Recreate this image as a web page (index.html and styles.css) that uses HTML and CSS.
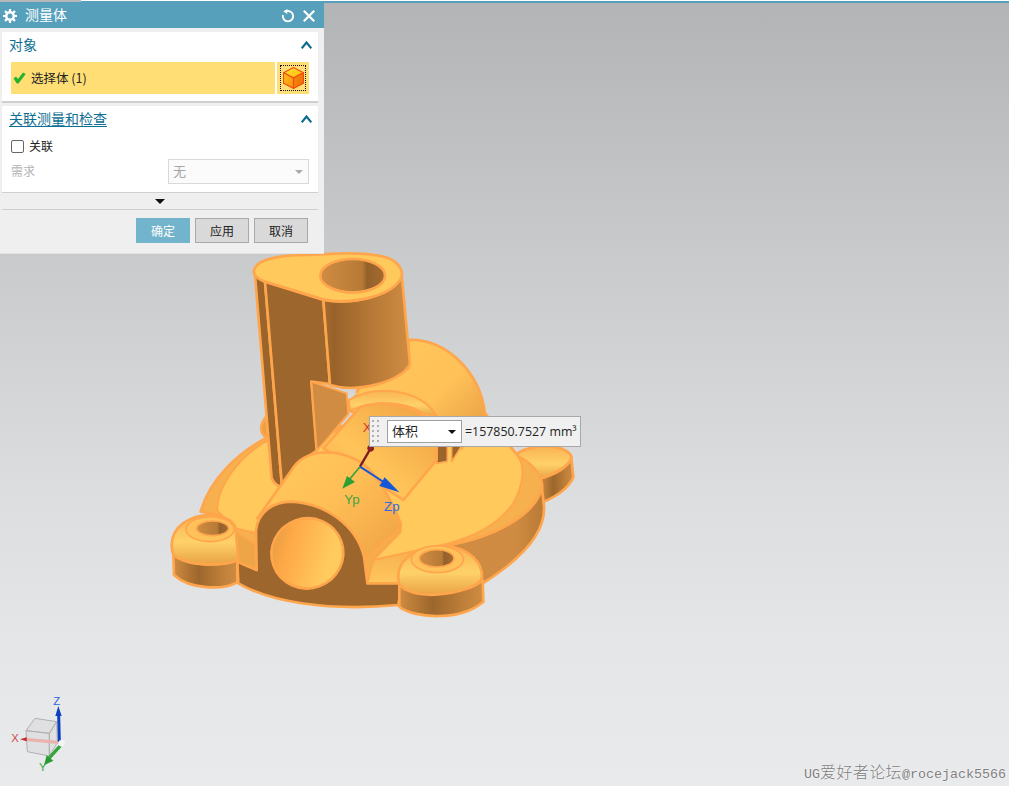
FILE: index.html
```html
<!DOCTYPE html>
<html lang="zh">
<head>
<meta charset="utf-8">
<title>测量体</title>
<link rel="stylesheet" href="styles.css">
</head>
<body>
<div class="app">
  <div class="topline"><span class="topline-gap"></span><span class="topline-bar"></span></div>
  <main class="canvas">
    <svg class="model" viewBox="0 0 1290 1170" width="430" height="390" aria-hidden="true">
      <defs>
        <linearGradient id="wallA" x1="0" x2="1" y1="0" y2="0">
          <stop offset="0" stop-color="#cf8b41"/><stop offset=".4" stop-color="#9c662c"/><stop offset=".75" stop-color="#bd7f39"/><stop offset="1" stop-color="#d08c42"/>
        </linearGradient>
        <linearGradient id="wallB" x1="0" x2="1" y1="0" y2="0">
          <stop offset="0" stop-color="#d08c42"/><stop offset=".7" stop-color="#cf8b41"/><stop offset="1" stop-color="#b87a36"/>
        </linearGradient>
        <linearGradient id="tower" x1="0" x2="1" y1="0" y2="0">
          <stop offset="0" stop-color="#a56c2f"/><stop offset=".12" stop-color="#98622a"/><stop offset=".6" stop-color="#b97b37"/><stop offset="1" stop-color="#d08c42"/>
        </linearGradient>
        <linearGradient id="bore" x1="0" x2="1" y1="0" y2="0">
          <stop offset="0" stop-color="#d08c42"/><stop offset=".65" stop-color="#b67a36"/><stop offset=".72" stop-color="#94602a"/><stop offset="1" stop-color="#a56c30"/>
        </linearGradient>
        <linearGradient id="dome" x1="0" x2="0" y1="0" y2="1">
          <stop offset="0" stop-color="#f8b352"/><stop offset=".55" stop-color="#ffd169"/><stop offset="1" stop-color="#e8a346"/>
        </linearGradient>
        <linearGradient id="cyl" x1="0" x2="1" y1="0" y2=".75">
          <stop offset="0" stop-color="#ffca5e"/><stop offset=".55" stop-color="#ffbf56"/><stop offset="1" stop-color="#f2a747"/>
        </linearGradient>
        <linearGradient id="cyl2" x1="0" x2="1" y1="1" y2="0">
          <stop offset="0" stop-color="#f8b04d"/><stop offset=".4" stop-color="#ffc459"/><stop offset="1" stop-color="#ee9f42"/>
        </linearGradient>
        <linearGradient id="elbow" x1="0" x2="1" y1=".1" y2=".9">
          <stop offset="0" stop-color="#ffc75c"/><stop offset=".6" stop-color="#ffc158"/><stop offset="1" stop-color="#e59c41"/>
        </linearGradient>
        <linearGradient id="hole" x1="0" x2="1" y1="0" y2=".7">
          <stop offset="0" stop-color="#d9963f"/><stop offset=".35" stop-color="#ffa947"/><stop offset=".85" stop-color="#ffcb5f"/>
        </linearGradient>
        <linearGradient id="rim" x1="0" x2="0" y1="0" y2="1">
          <stop offset="0" stop-color="#f7b04f"/><stop offset=".8" stop-color="#f6b04e"/><stop offset="1" stop-color="#ffc75d"/>
        </linearGradient>
      </defs>
      <g stroke="#ffa64d" stroke-width="8" stroke-linejoin="round">
        <path fill="#e8a042" d="M320 528C298 555 298 580 322 594Z"/>
        <path fill="url(#wallA)" d="M1140 715C1185 705 1228 680 1234 652L1240 712C1222 750 1185 770 1148 787Z"/>
        <path fill="url(#dome)" d="M1060 650C1100 608 1222 610 1234 650C1230 682 1180 702 1140 716Z"/>
        <path fill="url(#wallB)" d="M870 915C1000 890 1120 830 1146 745L1152 800C1156 880 1080 960 968 1030L930 1030Z"/>
        <path fill="url(#rim)" d="M122 815C148 720 230 640 325 590L960 500L1075 650C1125 670 1150 720 1146 745C1120 830 1000 890 870 915L720 1030L620 1030L290 1000L225 870L180 825Z"/>
        <path fill="#ffc95c" stroke-width="6" d="M172 812C170 740 240 645 325 600L960 520L1075 650C1095 680 1092 730 1060 790C1010 860 940 890 860 912L640 960L225 865Z"/>
        <path fill="url(#elbow)" d="M745 300C850 292 960 390 975 522L905 625L560 510L600 440L745 385Z"/>
        <path fill="#d8d8d8" stroke="none" d="M562 458L592 458L566 482Z"/>
        <path fill="url(#dome)" stroke-width="6" d="M566 480C650 432 780 445 832 530L790 520C735 482 640 480 570 512Z"/>
        <path fill="#9a642b" stroke-width="5" d="M830 618L862 618L862 664L830 670Z"/>
        <path fill="#9a642b" stroke-width="5" d="M875 618L905 618L875 665Z"/>
        <path fill="#9a642b" d="M285 105L335 715C345 735 355 740 366 740L315 125Z"/>
        <path fill="#9c662c" d="M315 125L490 180L510 432L454 425L470 632C440 650 395 685 366 740Z"/>
        <path fill="url(#tower)" d="M490 180C570 195 690 175 725 105L750 372C730 420 600 462 510 435Z"/>
        <path fill="#d08c42" stroke-width="6" d="M454 425L560 460L565 522L490 610L470 632Z"/>
        <path fill="#ffc95c" d="M282 90C290 55 370 45 440 45C520 40 610 35 670 50C710 60 730 85 725 110C700 170 570 195 490 178C430 160 370 140 315 125C295 118 278 108 282 90Z"/>
        <ellipse fill="url(#bore)" cx="578" cy="107" rx="97" ry="50"/>
        <path fill="url(#cyl2)" d="M490 625L600 502C680 475 790 500 830 570L830 660L730 780Z"/>
        <path fill="url(#cyl)" d="M292 835L395 690C430 630 520 620 600 665C650 700 690 770 722 850L722 862L612 957L400 900Z"/>
        <path fill="#f5ad4c" stroke-width="6" d="M612 957L722 860L722 876L640 960L622 1030Z"/>
        <path fill="#eea547" stroke-width="6" d="M225 875L290 915L290 990L232 965Z"/>
        <path fill="#9c662c" d="M232 965L290 990L288 870C295 815 340 785 395 785C500 790 590 860 612 950L622 1030L725 1030L715 1095C500 1115 330 1085 235 1030Z"/>
        <ellipse fill="url(#hole)" cx="442" cy="940" rx="108" ry="105" transform="rotate(-20 442 940)"/>
        <path fill="url(#wallA)" d="M40 945L42 1005C90 1050 190 1050 232 1027L232 960C180 980 90 980 40 945Z"/>
        <path fill="url(#dome)" d="M35 915C35 860 90 825 150 825C200 825 232 850 228 878L235 960C200 975 90 985 40 945C36 935 35 925 35 915Z"/>
        <ellipse fill="#ffc25a" cx="150" cy="868" rx="72" ry="37" stroke-width="5"/>
        <ellipse fill="url(#bore)" cx="158" cy="865" rx="48" ry="22" stroke-width="5"/>
        <path fill="url(#wallA)" d="M718 1035L718 1100C760 1135 900 1145 970 1085L968 1020C940 1055 790 1080 718 1035Z"/>
        <path fill="url(#dome)" d="M718 1032C700 960 770 915 860 918C930 925 968 970 966 1012C960 1045 850 1072 780 1062C750 1058 725 1045 718 1032Z"/>
        <ellipse fill="#ffc25a" cx="832" cy="958" rx="78" ry="40" stroke-width="5"/>
        <ellipse fill="url(#bore)" cx="830" cy="955" rx="52" ry="26" stroke-width="5"/>
      </g>
      <g class="triad">
        <path d="M600 680L632 625" stroke="#7b2020" stroke-width="7"/>
        <circle cx="632" cy="625" r="10" fill="#8a2222"/>
        <path d="M600 680L565 722" stroke="#36a33a" stroke-width="5"/>
        <path fill="#2f9e35" d="M547 746L561 708L585 726Z"/>
        <path d="M600 680L680 732" stroke="#1557d6" stroke-width="6"/>
        <path fill="#1557d6" d="M718 757L658 738L674 712Z"/>
        <text class="triad-x" x="608" y="575">X</text>
        <text class="triad-y" x="553" y="793">Yp</text>
        <text class="triad-z" x="672" y="812">Zp</text>
      </g>
    </svg>

    <div class="measure-tip">
      <span class="grip"></span>
      <div class="tip-select"><span class="cjk-lift">体积</span><i class="arrow-down"></i></div>
      <span class="tip-value">=157850.7527 mm³</span>
    </div>

    <svg class="gizmo" viewBox="0 0 270 300" width="90" height="100" aria-hidden="true">
      <g fill="#d4d5d6" fill-opacity=".45" stroke="#b0b0b1" stroke-width="3">
        <path d="M78 152L105 115L170 125L148 160Z"/>
        <path d="M78 152L148 160L148 228L82 215Z"/>
        <path d="M148 160L170 125L172 188L148 228Z"/>
      </g>
      <path d="M75 178L185 188" stroke="#e9b3ad" stroke-width="10"/>
      <path fill="#c42a2a" d="M60 178L80 172L80 184Z"/>
      <path d="M178 186L176 105" stroke="#0d3fc0" stroke-width="9"/>
      <path fill="#0d3fc0" d="M175 78L166 108L185 108Z"/>
      <path d="M182 196L146 236" stroke="#34a53a" stroke-width="10"/>
      <path fill="#2c9a34" d="M132 256L140 226L160 242Z"/>
      <circle cx="185" cy="190" r="10" fill="#f4f4f4"/>
      <text class="gizmo-x" x="34" y="187">X</text>
      <text class="gizmo-z" x="160" y="74">Z</text>
      <text class="gizmo-y" x="117" y="272">Y</text>
    </svg>

    <div class="watermark">UG<span class="watermark-cjk">爱好者论坛</span>@rocejack5566</div>
  </main>

  <section class="dialog">
    <header class="dialog-title">
      <svg class="icon-gear" viewBox="0 0 14 14" width="14" height="14" aria-hidden="true">
        <circle cx="7" cy="7" r="3.800" fill="none" stroke="#fff" stroke-width="2.600"/>
        <path d="M7 0v3M7 11v3M0 7h3M11 7h3M2 2l2.100 2.100M9.900 9.900L12 12M12 2L9.900 4.100M4.100 9.900L2 12" stroke="#fff" stroke-width="2.200"/>
      </svg>
      <span class="dialog-name">测量体</span>
      <svg class="icon-reset" viewBox="0 0 14 14" width="14" height="14" aria-hidden="true">
        <path d="M5.200 2.300A5.200 5.200 0 1 1 1.900 6" fill="none" stroke="#fff" stroke-width="1.900"/>
        <path d="M6.500 0L2.300 2.200l3.900 2.800z" fill="#fff"/>
      </svg>
      <svg class="icon-close" viewBox="0 0 12 12" width="12" height="12" aria-hidden="true">
        <path d="M.8 .8l10.400 10.400M11.200 .8L.8 11.200" stroke="#fff" stroke-width="2.200"/>
      </svg>
    </header>

    <div class="panel panel-object">
      <div class="panel-head">
        <span class="panel-title">对象</span>
        <svg class="chevron" viewBox="0 0 11 8" width="11" height="8" aria-hidden="true"><path d="M.7 7.300L5.500 1.500l4.800 5.800" fill="none" stroke="#0e6c8d" stroke-width="2.200"/></svg>
      </div>
      <div class="select-row">
        <div class="select-field">
          <svg class="check" viewBox="0 0 13 12" width="13" height="12" aria-hidden="true"><path d="M.5 6.500L3 4.500 5 7 10 .5 12.700 2 5.500 11.500H3.800z" fill="#25b32e"/></svg>
          <span class="cjk-lift">选择体 (1)</span>
        </div>
        <div class="select-button">
          <span class="focus-box">
            <svg viewBox="2 1.500 20 21" width="21" height="22" aria-hidden="true">
              <defs>
                <linearGradient id="cubeTop" x1="0" x2="1" y1="0" y2="1"><stop offset="0" stop-color="#ffe53a"/><stop offset="1" stop-color="#ffb400"/></linearGradient>
                <linearGradient id="cubeL" x1="0" x2="1" y1="0" y2="1"><stop offset="0" stop-color="#ffc21c"/><stop offset="1" stop-color="#f98a0a"/></linearGradient>
                <linearGradient id="cubeR" x1="0" x2="1" y1="0" y2="1"><stop offset="0" stop-color="#f78c0e"/><stop offset="1" stop-color="#e86c06"/></linearGradient>
              </defs>
              <g stroke="#f04a10" stroke-width="1" stroke-linejoin="round">
                <path fill="url(#cubeTop)" d="M12 2l9.500 5-9.500 5-9.500-5z"/>
                <path fill="url(#cubeL)" d="M2.500 7l9.500 5v10l-9.500-5z"/>
                <path fill="url(#cubeR)" d="M21.500 7L12 12v10l9.500-5z"/>
              </g>
            </svg>
          </span>
        </div>
      </div>
    </div>

    <div class="panel panel-assoc">
      <div class="panel-head">
        <span class="panel-title panel-title-link">关联测量和检查</span>
        <svg class="chevron" viewBox="0 0 11 8" width="11" height="8" aria-hidden="true"><path d="M.7 7.300L5.500 1.500l4.800 5.800" fill="none" stroke="#0e6c8d" stroke-width="2.200"/></svg>
      </div>
      <label class="check-row"><span class="checkbox"></span><span class="cjk-lift">关联</span></label>
      <div class="field-row">
        <span class="field-label cjk-lift">需求</span>
        <div class="field-select"><span class="cjk-lift">无</span><i class="arrow-down arrow-muted"></i></div>
      </div>
    </div>

    <div class="more-strip"><i class="arrow-more"></i></div>

    <footer class="actions">
      <button class="btn btn-primary" type="button">确定</button>
      <button class="btn" type="button">应用</button>
      <button class="btn" type="button">取消</button>
    </footer>
  </section>
</div>
</body>
</html>
```

FILE: styles.css
```css
* { box-sizing: border-box; }
html, body { margin: 0; height: 100%; overflow: hidden; }
body { font-family: "Noto Sans CJK SC", "Noto Sans", sans-serif; }

.app { position: relative; width: 1009px; height: 786px; display: flex; flex-direction: column; overflow: hidden; background: #bfc0c1; }

.topline { display: flex; height: 3px; flex: none; }
.topline-gap { width: 81px; background: #b7b8b9; }
.topline-bar { flex: 1; border-top: 1px solid #fff; background: #57a0bb; }

.canvas { position: relative; flex: 1; background: linear-gradient(180deg, #b3b4b5 0%, #c9cacb 32%, #dcdddf 62%, #e5e6e8 82%, #e9eaec 100%); }

.model { position: absolute; left: 160px; top: 237px; }
.triad { font-family: "Liberation Sans", sans-serif; font-size: 40px; }
.triad-x { fill: #d23a3a; }
.triad-y { fill: #3fa544; }
.triad-z { fill: #2f6be0; }

.gizmo { position: absolute; left: 0; top: 677px; }
.gizmo text { font-family: "Liberation Sans", sans-serif; font-size: 34px; }
.gizmo-x { fill: #d24a4a; }
.gizmo-y { fill: #3aa83f; }
.gizmo-z { fill: #2a63e0; }

.measure-tip { position: absolute; left: 369px; top: 413px; width: 212px; height: 31px; display: flex; align-items: center; background: #f0f0f0; border: 1px solid #a8a8a8; }
.grip { width: 7px; height: 24px; margin-left: 2px; background: repeating-linear-gradient(to bottom, #b0b0b0 0 2px, transparent 2px 5px) left / 2px 100% no-repeat, repeating-linear-gradient(to bottom, #b0b0b0 0 2px, transparent 2px 5px) right / 2px 100% no-repeat; }
.tip-select { width: 75px; height: 23px; margin-left: 8px; padding: 0 5px 0 4px; display: flex; align-items: center; justify-content: space-between; background: #fff; border: 1px solid #a0a0a0; font-size: 13px; color: #222; }
.tip-value { margin-left: 3px; font-family: "Open Sans", "Liberation Sans", sans-serif; font-size: 12.400px; color: #222; white-space: nowrap; }

.cjk-lift { position: relative; top: -1px; }

.arrow-down { width: 0; height: 0; border-left: 4px solid transparent; border-right: 4px solid transparent; border-top: 4px solid #111; }
.arrow-muted { border-top-color: #aaa; }

.watermark { position: absolute; right: 3px; bottom: 2px; font-family: "Liberation Mono", monospace; font-size: 13.330px; line-height: 18px; color: #808080; text-shadow: 0 0 2px #fff; white-space: nowrap; }
.watermark-cjk { font-family: "Noto Sans CJK SC", sans-serif; font-size: 16px; font-weight: 300; letter-spacing: .4px; }

.dialog { position: absolute; left: 0; top: 2px; width: 324px; height: 252px; display: flex; flex-direction: column; background: #efefef; border-bottom: 1px solid #e2e2e2; }
.dialog-title { height: 26px; flex: none; display: flex; align-items: center; padding: 0 9px 0 3px; background: #57a0bb; color: #fff; }
.icon-gear { margin-top: 1px; }
.dialog-name { margin-left: 8px; flex: 1; font-size: 14px; line-height: 26px; position: relative; top: -1px; }
.icon-reset { margin-right: 8px; margin-top: 1px; }
.icon-close { margin-top: 1px; }

.panel { margin: 4px 6px 0 2px; background: #fff; border-bottom: 2px solid #cfcfcf; }
.panel-object { height: 71px; }
.panel-assoc { height: 87px; margin-top: 3px; border-bottom-width: 1px; }
.panel-head { height: 26px; display: flex; align-items: center; justify-content: space-between; padding: 0 6px 0 7px; }
.panel-title { font-size: 14px; color: #0e6f94; position: relative; top: -1px; }
.panel-title-link { text-decoration: underline; text-underline-offset: 2px; }

.select-row { display: flex; gap: 2px; margin: 4px 9px 0; height: 32px; }
.select-field { flex: 1; display: flex; align-items: center; gap: 5px; padding-left: 2px; background: #ffdf75; font-size: 12.500px; color: #222; }
.select-button { width: 32px; display: flex; align-items: center; justify-content: center; background: #ffdf75; }
.focus-box { width: 26px; height: 26px; display: flex; align-items: center; justify-content: center; border: 1px dotted #111; }

.check-row { display: flex; align-items: center; gap: 5px; margin: 1px 0 0 9px; height: 26px; font-size: 12px; color: #222; }
.checkbox { width: 13px; height: 13px; background: #fff; border: 1px solid #666; border-radius: 2px; }
.field-row { display: flex; align-items: center; justify-content: space-between; margin: 0 9px; height: 25px; }
.field-label { font-size: 12px; color: #b5b5b5; }
.field-select { width: 141px; height: 25px; display: flex; align-items: center; justify-content: space-between; padding: 0 5px 0 4px; background: #fbfbfb; border: 1px solid #d9d9d9; font-size: 13px; color: #a5a5a5; }

.more-strip { height: 17px; flex: none; margin: 0 6px 0 2px; display: flex; align-items: center; justify-content: center; border-bottom: 1px solid #cfcfcf; }
.arrow-more { width: 0; height: 0; margin-top: 1px; border-left: 5px solid transparent; border-right: 5px solid transparent; border-top: 5px solid #111; }

.actions { display: flex; justify-content: flex-end; gap: 5px; padding: 8px 16px 0 0; }
.btn { width: 54px; height: 25px; padding: 0; font-family: inherit; font-size: 12px; color: #222; background: #d9d9d9; border: 1px solid #a9a9a9; }
.btn-primary { color: #fff; background: #72b4cb; border-color: #72b4cb; }
```
